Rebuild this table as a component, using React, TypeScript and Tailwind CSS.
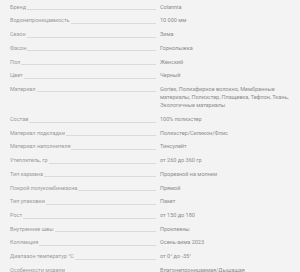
import React from "react";

const rows: [string, string][] = [
  ["Бренд", "Colannia"],
  ["Водонепроницаемость", "10 000 мм"],
  ["Сезон", "Зима"],
  ["Фасон", "Горнолыжка"],
  ["Пол", "Женский"],
  ["Цвет", "Черный"],
  ["Материал", "Gortex, Полиэфирное волокно, Мембранные материалы, Полиэстер, Плащевка, Тефлон, Ткань, Экологичные материалы"],
  ["Состав", "100% полиэстер"],
  ["Материал подкладки", "Полиэстер/Силикон/Флис"],
  ["Материал наполнителя", "Тинсулейт"],
  ["Утеплитель, гр", "от 260 до 360 гр"],
  ["Тип кармана", "Прорезной на молнии"],
  ["Покрой полукомбинезона", "Прямой"],
  ["Тип упаковки", "Пакет"],
  ["Рост", "от 150 до 180"],
  ["Внутренние швы", "Проклеены"],
  ["Коллекция", "Осень-зима 2023"],
  ["Диапазон температур °C", "от 0° до -35°"],
  ["Особенности модели", "Влагонепроницаемая/Дышащая"],
];

export default function App() {
  return (
    <div
      className="w-[300px] h-[272px] overflow-hidden bg-[#f3f3f3] pl-[10px] pr-[8px]"
      style={{ fontFamily: "Roboto, 'Liberation Sans', sans-serif" }}
    >
      {rows.map(([k, v]) => (
        <div key={k} className="flex py-[2.75px] text-[5.5px] leading-[8.2px]">
          <div className="flex w-[146px] shrink-0 items-start text-[#9a9a9a]">
            <span className="whitespace-nowrap">{k}</span>
            <span className="ml-[1px] mt-[6.5px] flex-1 border-b border-[#dadada]" />
          </div>
          <div className="ml-[4px] flex-1 text-[#8c8c8c]">{v}</div>
        </div>
      ))}
    </div>
  );
}
